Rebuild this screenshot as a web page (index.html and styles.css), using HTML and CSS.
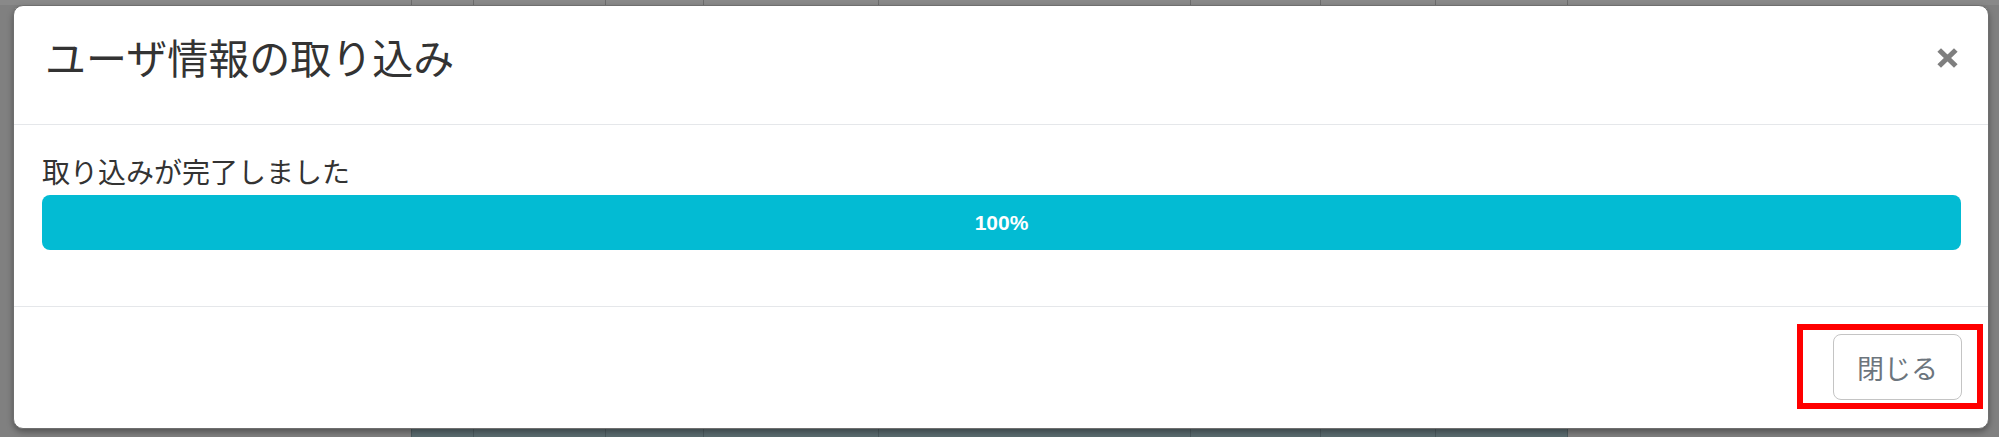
FILE: index.html
```html
<!DOCTYPE html>
<html lang="ja">
<head>
<meta charset="utf-8">
<title>ユーザ情報の取り込み</title>
<link rel="stylesheet" href="styles.css">
</head>
<body>
<div class="page">
  <div class="strip strip-top">
    <div class="col c0"></div><div class="col c1"></div><div class="col c2"></div><div class="col c3"></div><div class="col c4"></div><div class="col c5"></div><div class="col c6"></div><div class="col c7"></div><div class="col c8"></div><div class="col c9"></div>
  </div>
  <div class="modal">
    <div class="modal-header">
      <h4 class="modal-title">ユーザ情報の取り込み</h4>
      <button class="close" type="button" aria-label="Close">
        <svg width="21" height="20" viewBox="0 0 21 20"><path d="M2.2 2 L18.8 18 M18.8 2 L2.2 18" stroke="#7f7f7f" stroke-width="5.2" fill="none" stroke-linecap="butt"/></svg>
      </button>
    </div>
    <div class="modal-body">
      <div class="label">取り込みが完了しました</div>
      <div class="progress"><div class="progress-bar" style="width:100%">100%</div></div>
    </div>
    <div class="modal-footer">
      <button class="btn" type="button">閉じる</button>
      <div class="highlight"></div>
    </div>
  </div>
  <div class="strip strip-bottom">
    <div class="col c0 plain"></div><div class="col c1"></div><div class="col c2"></div><div class="col c3"></div><div class="col c4"></div><div class="col c5"></div><div class="col c6"></div><div class="col c7"></div><div class="col c8"></div><div class="col c9 plain"></div>
  </div>
</div>
</body>
</html>
```
FILE: styles.css
```css
html, body {
  margin: 0;
  padding: 0;
  background: #808080;
  width: 1999px;
  height: 437px;
  overflow: hidden;
}
.page {
  display: flex;
  flex-direction: column;
  width: 1999px;
  height: 437px;
}
.strip {
  display: flex;
  flex: none;
}
.strip-top {
  height: 5px;
  background: #898989;
}
.strip-bottom {
  height: 8px;
  background: #5b6c70;
}
.col {
  height: 100%;
  flex: none;
  box-sizing: border-box;
  border-left: 1px solid #4c5b5f;
}
.strip-top .col { border-left-color: #6d6d6d; }
.c0 { width: 411px; border-left: none; }
.c1 { width: 62px; }
.c2 { width: 132px; }
.c3 { width: 98px; }
.c4 { width: 175px; }
.c5 { width: 312px; }
.c6 { width: 130px; }
.c7 { width: 115px; }
.c8 { width: 132px; }
.c9 { flex: 1; }
.strip-bottom .plain { background: #808080; }

.modal {
  flex: none;
  margin-left: 13px;
  width: 1976px;
  height: 424px;
  box-sizing: border-box;
  background: #fff;
  border: 1px solid #6f6f6f;
  border-radius: 10px;
  box-shadow: 0 3px 6px rgba(0,0,0,0.35);
  display: flex;
  flex-direction: column;
  position: relative;
  z-index: 1;
  font-family: "Noto Sans CJK JP", "Noto Sans", sans-serif;
}
.modal-header {
  height: 118px;
  flex: none;
  border-bottom: 1px solid #e5e7ea;
  display: flex;
  align-items: flex-start;
  justify-content: space-between;
  padding: 0 30px 0 31px;
}
.modal-title {
  margin: 0;
  padding-top: 25px;
  font-size: 41px;
  line-height: 50px;
  font-weight: 400;
  color: #333;
}
.close {
  border: none;
  background: none;
  padding: 0;
  margin-top: 42px;
  width: 21px;
  height: 20px;
  display: flex;
}
.modal-body {
  flex: none;
  height: 181px;
  box-sizing: border-box;
  padding: 26px 27px 0 28px;
}
.label {
  font-size: 28px;
  line-height: 40px;
  color: #333;
  height: 44px;
}
.progress {
  height: 55px;
  background: #e9ecef;
  border-radius: 8px;
  overflow: hidden;
  display: flex;
}
.progress-bar {
  background: #03bbd3;
  color: #fff;
  font-family: "Liberation Sans", Arial, sans-serif;
  font-weight: 700;
  font-size: 21px;
  display: flex;
  align-items: center;
  justify-content: center;
}
.modal-footer {
  flex: 1;
  border-top: 1px solid #e5e7ea;
  display: flex;
  align-items: center;
  justify-content: flex-end;
  padding-right: 26px;
  position: relative;
}
.btn {
  width: 129px;
  height: 66px;
  box-sizing: border-box;
  border: 1px solid #c4c4c4;
  border-radius: 8px;
  background: #fff;
  color: #6c757d;
  font-family: "Noto Sans CJK JP", "Noto Sans", sans-serif;
  font-size: 27px;
  padding: 0;
  margin-top: -1px;
}
.highlight {
  position: absolute;
  top: 17px;
  right: 5px;
  width: 186px;
  height: 85px;
  box-sizing: border-box;
  border: 6px solid #ff0000;
}
```
